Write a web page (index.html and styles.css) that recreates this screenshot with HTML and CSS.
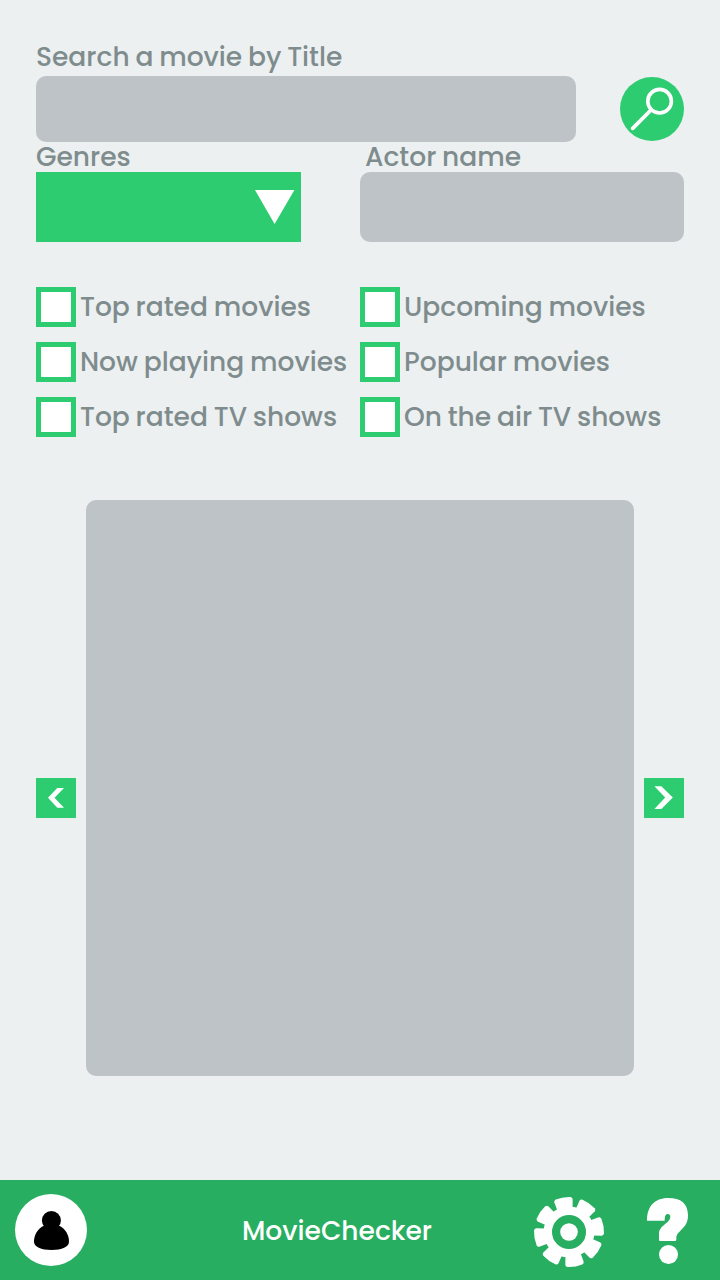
FILE: index.html
```html
<!DOCTYPE html>
<html lang="en">
<head>
<meta charset="utf-8">
<title>MovieChecker</title>
<link rel="stylesheet" href="styles.css">
</head>
<body>
<main class="page">
  <form class="search">
    <div class="title-row">
      <div class="field title-field">
        <label class="label" for="title">Search a movie by Title</label>
        <input class="input" id="title" type="text">
      </div>
      <button class="search-button" type="button" aria-label="Search">
        <svg width="64" height="64" viewBox="0 0 64 64" fill="none" stroke="#fff"><circle cx="39.6" cy="24.2" r="11.8" stroke-width="3.6"/><path d="M31 33 12.7 51.3" stroke-width="3.8" stroke-linecap="round"/></svg>
      </button>
    </div>
    <div class="filter-row">
      <div class="field genre-field">
        <span class="label">Genres</span>
        <button class="select" type="button" aria-label="Genres">
          <svg width="40" height="34" viewBox="0 0 40 34"><path d="M0 0H39.4L19.6 34Z" fill="#fff"/></svg>
        </button>
      </div>
      <div class="field actor-field">
        <label class="label actor-label" for="actor">Actor name</label>
        <input class="input" id="actor" type="text">
      </div>
    </div>
    <div class="checks">
      <label class="check"><input type="checkbox"><span>Top rated movies</span></label>
      <label class="check"><input type="checkbox"><span>Upcoming movies</span></label>
      <label class="check"><input type="checkbox"><span>Now playing movies</span></label>
      <label class="check"><input type="checkbox"><span>Popular movies</span></label>
      <label class="check"><input type="checkbox"><span>Top rated TV shows</span></label>
      <label class="check"><input type="checkbox"><span>On the air TV shows</span></label>
    </div>
  </form>
  <section class="carousel">
    <button class="arrow" type="button" aria-label="Previous">
      <svg width="40" height="40" viewBox="0 0 40 40"><path d="M21.3 10H28L18.5 19.8 28 29.8H21.3L12 19.8Z" fill="#fff"/></svg>
    </button>
    <div class="poster"></div>
    <button class="arrow" type="button" aria-label="Next">
      <svg width="40" height="40" viewBox="0 0 40 40"><path d="M10.4 8.2H17.3L28.8 19.6 17.3 31H10.4L21.2 19.6Z" fill="#fff"/></svg>
    </button>
  </section>
</main>
<footer class="bar">
  <button class="avatar" type="button" aria-label="Profile">
    <svg width="72" height="72" viewBox="0 0 72 72"><circle cx="36.4" cy="26.5" r="9.5"/><path d="M29.5 31.5H43.5C51 34.5 54 42 54 47.5C54 53 47 56 36.5 56C26 56 19 53 19 47.5C19 42 22 34.5 29.5 31.5Z"/></svg>
  </button>
  <h1 class="brand">MovieChecker</h1>
  <button class="tool gear" type="button" aria-label="Settings">
    <svg width="72" height="72" viewBox="-36 -36 72 72" fill="#fff">
      <defs><path id="tooth" d="M-7.5-22-9.3-31.8Q-9.3-33.6-7.4-34.2Q0-35.8 7.4-34.2Q9.3-33.6 9.3-31.8L7.5-22Z"/></defs>
      <circle r="21.2" fill="none" stroke="#fff" stroke-width="8.4"/><circle r="8.8"/>
      <use href="#tooth" transform="rotate(-10)"/><use href="#tooth" transform="rotate(35)"/>
      <use href="#tooth" transform="rotate(80)"/><use href="#tooth" transform="rotate(125)"/>
      <use href="#tooth" transform="rotate(170)"/><use href="#tooth" transform="rotate(215)"/>
      <use href="#tooth" transform="rotate(260)"/><use href="#tooth" transform="rotate(305)"/>
    </svg>
  </button>
  <button class="tool help" type="button" aria-label="Help">
    <svg width="42" height="68" viewBox="0 0 42 68" fill="#fff"><path d="M0 22.7C0 8.5 7.5 0 21 0C34 0 41 5.5 41 17.5C41 31 29.3 32.5 29.3 40V42L28.5 43H12.5L12 42V36C12 27 23.3 25.5 23.3 18.8C23.3 17 22.3 16 20.8 16C18.5 16 17.7 18 17.7 22.7Z"/><circle cx="21.5" cy="56.5" r="9.5"/></svg>
  </button>
</footer>
</body>
</html>
```
FILE: styles.css
```css
* { box-sizing: border-box; }
body {
  margin: 0;
  width: 720px;
  height: 1280px;
  display: flex;
  flex-direction: column;
  background: #ecf0f1;
  color: #7f8c8d;
  font: 500 26.5px/30px Poppins, Inter, "Liberation Sans", sans-serif;
  word-spacing: -1.1px;
  white-space: nowrap;
}
button { display: block; padding: 0; border: 0; background: none; }
svg { display: block; }
.page { flex: 1; padding: 42px 36px 0; }
.search { display: flex; flex-direction: column; }
.field { display: flex; flex-direction: column; }
.title-row { display: flex; justify-content: space-between; align-items: flex-end; }
.title-field { width: 540px; }
.label { height: 30px; }
.title-field .label { height: 34px; }
.input {
  width: 100%;
  height: 70px;
  padding: 0 16px;
  border: 0;
  border-radius: 10px;
  background: #bdc3c7;
  font: inherit;
}
.title-field .input { height: 66px; }
.search-button { width: 64px; height: 64px; margin-bottom: 1px; border-radius: 50%; background: #2ecc71; }
.filter-row { display: flex; justify-content: space-between; }
.genre-field { width: 265px; }
.actor-field { width: 324px; }
.actor-label { padding-left: 5px; }
.select { display: flex; justify-content: flex-end; align-items: center; height: 70px; padding-right: 6px; background: #2ecc71; }
.checks { display: grid; grid-template-columns: 324px 324px; row-gap: 15px; margin-top: 45px; }
.check { display: flex; align-items: center; gap: 4px; height: 40px; }
.check input { appearance: none; flex: none; width: 40px; height: 40px; margin: 0; border: 5px solid #2ecc71; background: #fff; }
.carousel { display: flex; justify-content: space-between; margin-top: 63px; }
.poster { width: 548px; height: 576px; border-radius: 10px; background: #bdc3c7; }
.arrow { width: 40px; height: 40px; margin-top: 278px; background: #2ecc71; }
.bar { display: flex; align-items: center; height: 100px; padding: 0 31px 0 15px; background: #27ae60; }
.avatar { width: 72px; height: 72px; border-radius: 50%; background: #fff; }
.brand { flex: 1; margin: 2px 0 0 155px; font: inherit; color: #fff; }
.gear { margin: 4px 42px 0 0; }
.help { margin-top: 4px; }
```
